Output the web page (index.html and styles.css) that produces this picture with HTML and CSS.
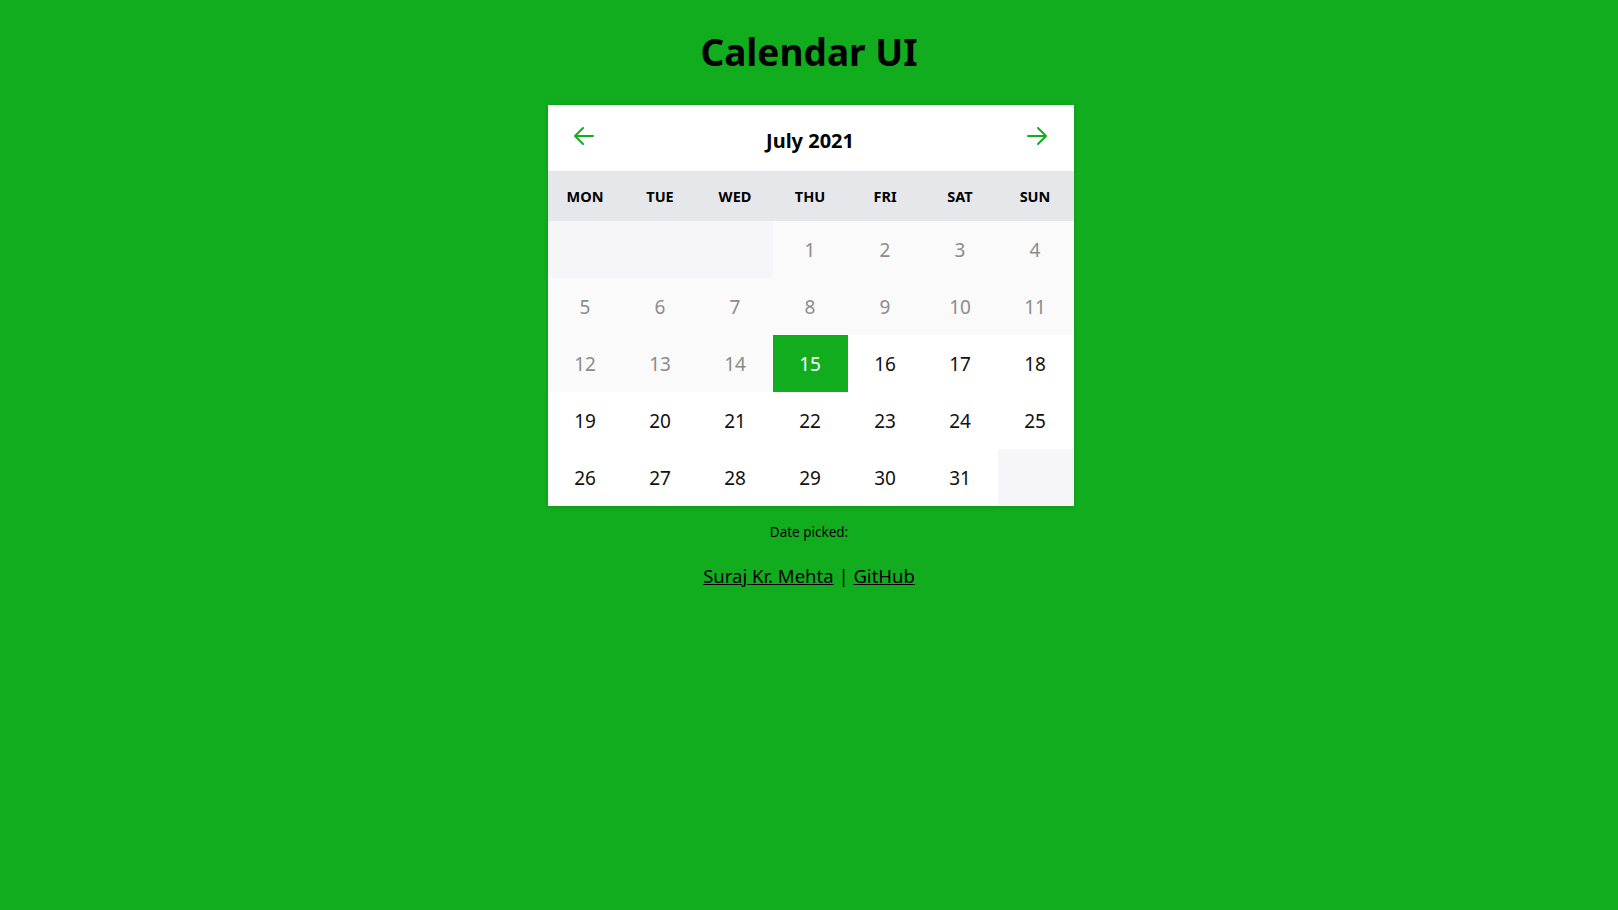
FILE: index.html
```html
<!DOCTYPE html>
<html lang="en">
<head>
<meta charset="utf-8">
<title>Calendar UI</title>
<link rel="stylesheet" href="styles.css">
</head>
<body>
<main class="page">
  <h1 class="title">Calendar UI</h1>
  <section class="calendar">
    <header class="cal-header">
      <button class="nav-btn" aria-label="Previous month">
        <svg width="22" height="20" viewBox="0 0 22 20" fill="none" stroke="currentColor" stroke-width="2" stroke-linecap="round" stroke-linejoin="round"><path d="M20 10H2M10 2L2 10L10 18"/></svg>
      </button>
      <div class="month">July 2021</div>
      <button class="nav-btn" aria-label="Next month">
        <svg width="22" height="20" viewBox="0 0 22 20" fill="none" stroke="currentColor" stroke-width="2" stroke-linecap="round" stroke-linejoin="round"><path d="M2 10H20M12 2L20 10L12 18"/></svg>
      </button>
    </header>
    <div class="weekdays">
      <div>MON</div><div>TUE</div><div>WED</div><div>THU</div><div>FRI</div><div>SAT</div><div>SUN</div>
    </div>
    <div class="days">
      <div class="day empty"></div><div class="day empty"></div><div class="day empty"></div>
      <div class="day past">1</div><div class="day past">2</div><div class="day past">3</div><div class="day past">4</div>
      <div class="day past">5</div><div class="day past">6</div><div class="day past">7</div><div class="day past">8</div><div class="day past">9</div><div class="day past">10</div><div class="day past">11</div>
      <div class="day past">12</div><div class="day past">13</div><div class="day past">14</div><div class="day today">15</div><div class="day">16</div><div class="day">17</div><div class="day">18</div>
      <div class="day">19</div><div class="day">20</div><div class="day">21</div><div class="day">22</div><div class="day">23</div><div class="day">24</div><div class="day">25</div>
      <div class="day">26</div><div class="day">27</div><div class="day">28</div><div class="day">29</div><div class="day">30</div><div class="day">31</div><div class="day empty"></div>
    </div>
  </section>
  <p class="picked">Date picked:</p>
  <p class="credits"><a href="#">Suraj Kr. Mehta</a> | <a href="#">GitHub</a></p>
</main>
</body>
</html>
```
FILE: styles.css
```css
html, body {
  margin: 0;
  padding: 0;
}
body {
  background: #11ad1e;
  font-family: "Noto Sans", "Open Sans", sans-serif;
  color: #000;
  min-height: 910px;
}
.page {
  display: flex;
  flex-direction: column;
  align-items: center;
  padding-top: 28px;
}
.title {
  margin: 0 0 29px;
  font-size: 37px;
  line-height: 48px;
  font-weight: 700;
}
.calendar {
  width: 526px;
  margin-left: 3px;
  background: #fff;
  box-shadow: 0 1px 4px rgba(0, 0, 0, 0.15);
}
.cal-header {
  height: 66px;
  display: flex;
  align-items: center;
  justify-content: space-between;
  padding: 0 26px 0 25px;
}
.nav-btn {
  border: 0;
  background: none;
  padding: 0;
  color: #11ad1e;
  display: flex;
  margin-top: -5px;
  cursor: pointer;
}
.month {
  font-size: 20px;
  font-weight: 700;
  margin-top: 4px;
}
.weekdays {
  display: grid;
  grid-template-columns: repeat(7, 75px);
  height: 50px;
  align-items: center;
  background: #e6e7eb;
  font-size: 14.5px;
  font-weight: 700;
  text-align: center;
}
.days {
  display: grid;
  grid-template-columns: repeat(7, 75px);
  grid-auto-rows: 57px;
}
.day {
  display: flex;
  align-items: center;
  justify-content: center;
  font-size: 19px;
  color: #111;
}
.day.past {
  background: #fafafa;
  color: #8c8c8c;
}
.day.empty {
  background: #f6f6f8;
}
.day.today {
  background: #11ad1e;
  color: #fff;
}
.picked {
  margin: 16px 0 0;
  font-size: 13.5px;
  line-height: 20px;
}
.credits {
  margin: 21px 0 0;
  font-size: 18.5px;
  line-height: 26px;
}
.credits a {
  color: #000;
}
```
